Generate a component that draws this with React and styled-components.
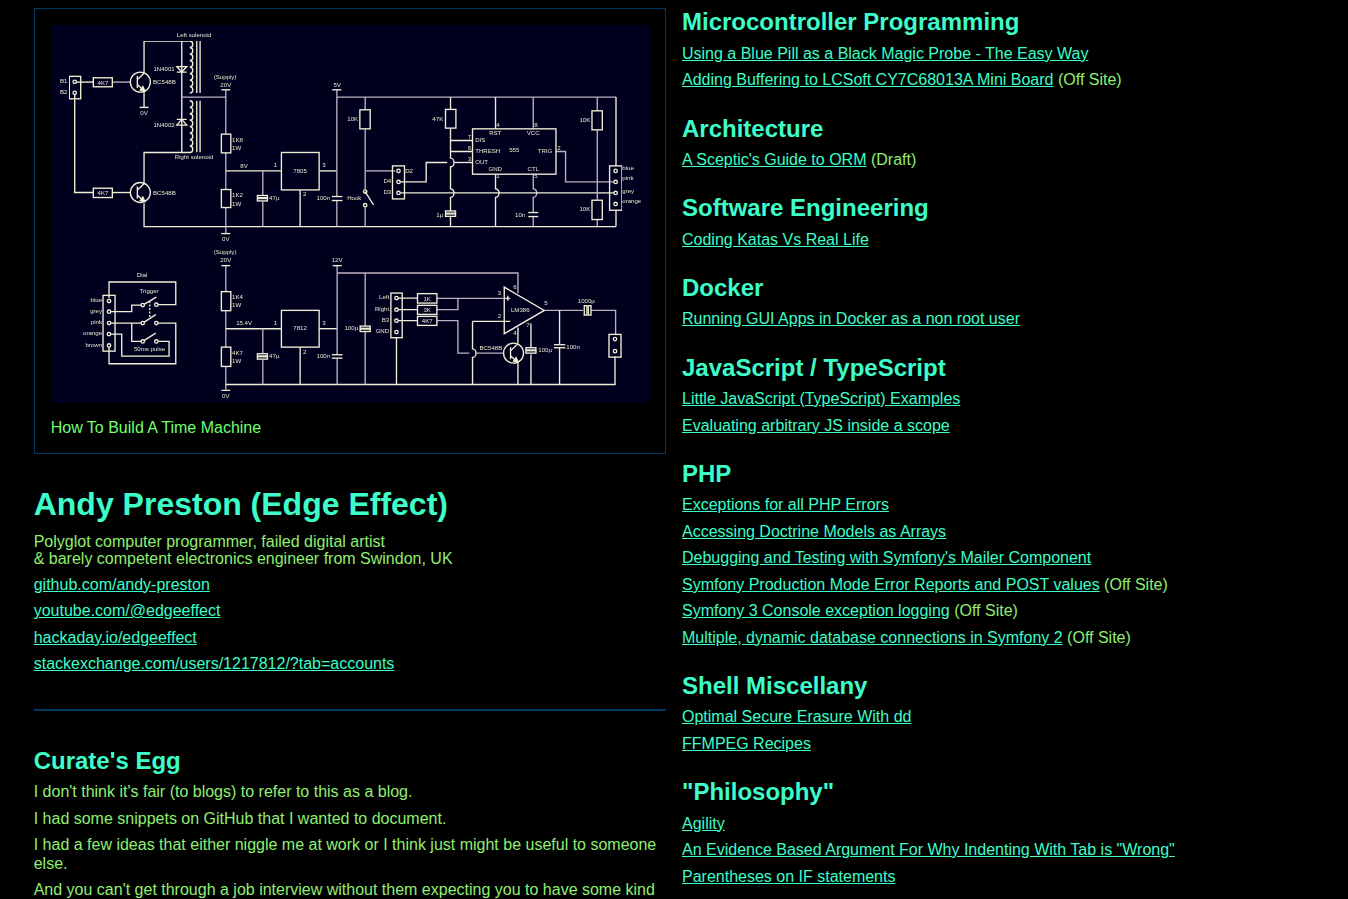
import React from "react";
import styled, { createGlobalStyle } from "styled-components";

const Global = createGlobalStyle`
  html, body { margin: 0; padding: 0; background: #000; }
  body { font-family: "Liberation Sans", Arial, sans-serif; font-size: 16px; line-height: 1.15; color: #90ee70; }
`;
const Page = styled.div`
  display: grid; grid-template-columns: 1fr 1fr; column-gap: 16px; padding: 8px 2.5% 0; box-sizing: border-box;
`;
const Column = styled.div`min-width: 0;`;
const RightColumn = styled(Column)`padding-top: 0.35px;`;
const Figure = styled.figure`
  margin: 0; padding: 16px; border: 1px solid #003a63;
`;
const Diagram = styled.svg`display: block; width: 100%; height: 377.5px; background: #00001e;`;
const Caption = styled.figcaption`margin-top: 16px; color: #70ff70;`;
const Title = styled.h1`margin: 32px 0 10px; font-size: 32px; font-weight: 700; color: #3dfdc8;`;
const Heading = styled.h2`
  margin: ${p => (p.$first ? "0" : "24.7px")} 0 8.9px; font-size: 24px; font-weight: 700; color: #3dfdc8;
`;
const Bio = styled.p`margin: 0 0 8.3px; line-height: 17.3px; color: #90ee70;`;
const Item = styled.p`margin: 8px 0; line-height: 18.5px; color: #90ee70;`;
const Link = styled.a`color: #3dfdc8; text-decoration: underline;`;
const Rule = styled.hr`margin: 35px 0 0; border: 0; border-top: 2px solid #003a63;`;
const EggHeading = styled(Heading)`margin: 36px 0 9.3px;`;

const sections = [
  ["Microcontroller Programming", [["Using a Blue Pill as a Black Magic Probe - The Easy Way"], ["Adding Buffering to LCSoft CY7C68013A Mini Board", "(Off Site)"]]],
  ["Architecture", [["A Sceptic's Guide to ORM", "(Draft)"]]],
  ["Software Engineering", [["Coding Katas Vs Real Life"]]],
  ["Docker", [["Running GUI Apps in Docker as a non root user"]]],
  ["JavaScript / TypeScript", [["Little JavaScript (TypeScript) Examples"], ["Evaluating arbitrary JS inside a scope"]]],
  ["PHP", [["Exceptions for all PHP Errors"], ["Accessing Doctrine Models as Arrays"], ["Debugging and Testing with Symfony's Mailer Component"], ["Symfony Production Mode Error Reports and POST values", "(Off Site)"], ["Symfony 3 Console exception logging", "(Off Site)"], ["Multiple, dynamic database connections in Symfony 2", "(Off Site)"]]],
  ["Shell Miscellany", [["Optimal Secure Erasure With dd"], ["FFMPEG Recipes"]]],
  ['"Philosophy"', [["Agility"], ['An Evidence Based Argument For Why Indenting With Tab is "Wrong"'], ["Parentheses on IF statements"]]],
];

const W = "#f0efd6";
const L = "#bdb1c0";
const wires = [
  // upper left
  ["M144 73V41H190", W], ["M181.7 41V152.3", W], ["M144 183V152.3H190", W], ["M144 107V90", W],
  ["M181.7 97H225.7", L], ["M225.7 89.7V134", L], ["M225.7 152.7V189.3", L], ["M225.7 207.3V233.3", L],
  ["M196.7 41V93M200 41V93M196.7 100.7V152M200 100.7V152", W],
  ["M74.7 82H93.3", W], ["M112.3 82H130", L], ["M74.7 92.7V192.3H93.3", W], ["M112.3 192.3H130", W],
  ["M144 203V226.3H615.7", W], ["M225.7 170.7H281.3", W], ["M262.7 170.7V195.3M262.7 201.3V226.3", L],
  ["M319 170.7H336.7", W], ["M336.7 89.7V196.3M336.7 200.3V226.3", L], ["M300 189.7V226.3", W],
  ["M336.7 97H615.7", L], ["M365 97V109.7M365 128.7V189", L], ["M365 207V226.3", L], ["M365 170.7H395", L],
  ["M398.3 181.7H426V162.3H447", W], ["M454 162.3H472.3", W],
  ["M450.3 97V109.3", W], ["M450.3 128V158a3.5 4.3 0 0 1 0 8.6V188.5a3.5 4.3 0 0 1 0 8.6V210.7M450.3 216.3V226.3", W],
  ["M450.3 140.3H472.3M450.3 151.3H472.3", W],
  ["M495.3 97V128.7M495.3 174V188.5a3.5 4.3 0 0 1 0 8.6V226.3", W],
  ["M533 97V128.7", L], ["M533 174V188.5a3.5 4.3 0 0 1 0 8.6V212.3M533 216.3V226.3", L],
  ["M398.3 192.7H615.3", W], ["M555.7 151.3H565.3V181.7H615.3", L],
  ["M597 97V110.7M597 129.7V200M597 219.3V226.3", L], ["M615.7 97V165.7M615.7 210V226.3", W],
  // dial
  ["M109 298V281.7H175.7V304.3H156.3", W], ["M109 311.3H131.7V304.7H142.7", W], ["M142.7 304.7L156.3 296.7", W],
  ["M109 322.7H142.7", W], ["M142.7 322.7L155.7 314.3", W], ["M156.3 322.7H175.7V363.3H109V345", W],
  ["M131.7 322.7V341H142.7", W], ["M142.7 341L155.7 332.7", W], ["M156.3 341H169V355.7H121.7V333.7H109", W],
  // lower
  ["M225.7 265.3V291.3", L], ["M225.7 310.3V346.7", L], ["M225.7 366V390", L], ["M225.7 328.3H281.3", W],
  ["M225.7 384H615.3", W], ["M262.7 328.3V353.3M262.7 359.3V384", L], ["M300 346.7V384", W], ["M319 328.3H337", W],
  ["M337 265.3V354.3M337 357.7V384", L], ["M337 272.7H517.7V293", L], ["M365 272.7V325.7M365 331V384", L],
  ["M396.3 297.7H417.3M396.3 309.3H417.3M396.3 320.3H417.3", W], ["M396.3 337.3V384", W],
  ["M436.7 298H503.3M436.7 309.3H457.7V298", L], ["M436.7 320.3H457.7V352.7H469M476 352.7H503.3", L],
  ["M472.3 321H504M472.3 321V348.4a3.5 4.3 0 0 1 0 8.6V384", W],
  ["M517.7 327V343", W], ["M517.7 362V384", W], ["M530.7 323V347.3M530.7 354V384", W],
  ["M544 310H582.7M590.7 310H615.3V334", L], ["M559.3 310V344.3M559.3 347.3V384", W], ["M614.7 356V384", W],
];
const boxes = [
  [69.3,76.3,11.4,22.4],[93.3,77.7,19,9],[93.3,188,19,9.3],[221.3,134,9.4,18.7],[221.3,189.3,9.4,18],
  [281.3,152.3,37.7,37.4],[359.7,109.7,10.3,19],[392.3,165.7,12,33],[445.3,109.3,10.4,18.7],[472.3,128.7,83.4,45.3],
  [591.7,110.7,10.3,19],[591.7,200,10.3,19.3],[609.3,165.7,12.4,44.3],
  [103,295,12,55.7],[221.3,291.3,9.4,19],[221.3,346.7,9.4,19.3],[281.3,310,37.7,36.7],
  [390.7,292.7,11.3,44.6],[417.3,293.3,19.4,9.4],[417.3,305,19.4,9],[417.3,316,19.4,9],[608.7,334,12,22.7],
  [584,305.3,2.6,9.4],[588,305.3,2.7,9.4],
];
const polarCaps = [[257.3,195.3],[257.3,353.3],[445.3,210.7],[360,325.7],[525.7,347.3]];
const plates = [[331.7,196.3,342.3],[331.7,200.3,342.3],[528,212.3,538],[528,216.3,538],[331.7,354.3,342.3],[331.7,357.7,342.3],[553.7,344.3,565],[553.7,347.3,565]];
const grounds = [[144,107.3],[225.7,233.3],[225.7,390]];
const rails = [[225.7,89.7],[336.7,89.7],[225.7,265.3],[337,265.3]];
const pins = [
  [74.7,81.7],[74.7,92.7],[398.3,170.7],[398.3,181.7],[398.3,192.7],[615.3,170.7],[615.3,181.7],[615.3,192.7],[615.3,203.7],
  [365,191.3],[365,205],[109,300.7],[109,311.3],[109,322.7],[109,333.7],[109,345],
  [142.7,304.7],[156.3,304.3],[142.7,322.7],[156.3,322.7],[142.7,341],[156.3,341],
  [396.3,297.7],[396.3,309.3],[396.3,320.3],[396.3,331.7],[614.7,338.7],[614.7,350.7],
];
const labels = [
  ["Left solenoid",194,37,"middle"],["1N4001",164,71,"middle"],["BC548B",153,84],["0V",144,115,"middle"],["B1",67.5,83,"end"],["B2",67.5,94,"end"],
  ["4K7",103,84.5,"middle"],["4K7",103,194.5,"middle"],["1N4002",164,127,"middle"],["Right solenoid",194,159,"middle"],["BC548B",153,195],
  ["(Supply)",225,79,"middle"],["20V",225.7,87,"middle"],["5V",337,87,"middle"],["1K8",232,142],["1W",232,150],["8V",244,168,"middle"],["1",277,167,"end"],
  ["3",322,167],["2",303,196],["7805",300,172.5,"middle"],["1K2",232,197],["1W",232,206],["47\u00b5",269,200],["100n",330,200,"end"],["0V",225.7,241,"middle"],["Hook",347,200],
  ["10K",358,121,"end"],["47K",443,121,"end"],["D2",405,173],["D4",391,183,"end"],["D3",391,194,"end"],["1\u00b5",443,217,"end"],
  ["4",496,127],["8",534,127],["7",471,139,"end"],["6",471,150,"end"],["3",471,161,"end"],["2",557,150],["1",496,178],["5",534,178],
  ["RST",495,135,"middle"],["VCC",533,135,"middle"],["DIS",475,142],["THRESH",475,153],["555",514,152,"middle"],["TRIG",552,153,"end"],["OUT",475,164],["GND",495,171,"middle"],["CTL",533,171,"middle"],
  ["10n",525,217,"end"],["10K",590,122,"end"],["10K",590,211,"end"],["blue",622,170],["pink",622,180],["grey",622,193],["orange",622,203],
  ["Dial",142,277,"middle"],["Trigger",149,293,"middle"],["blue",102,302,"end"],["grey",102,313,"end"],["pink",102,324,"end"],["orange",102,335,"end"],["brown",102,347,"end"],["50ms pulse",149.5,351,"middle"],
  ["(Supply)",225,254,"middle"],["20V",225.7,262,"middle"],["12V",337,262,"middle"],["1K4",232,299],["1W",232,307],["15.4V",244,325,"middle"],["1",277,325,"end"],["3",322,325],["2",303,354],["7812",300,329.5,"middle"],
  ["4K7",232,355],["1W",232,363],["47\u00b5",269,358],["100n",330,358,"end"],["0V",225.7,398,"middle"],
  ["100\u00b5",358,330,"end"],["Left",389,299,"end"],["Right",389,311,"end"],["B3",389,322,"end"],["GND",389,333,"end"],["1K",427,300.5,"middle"],["3K",427,311.5,"middle"],["4K7",427,322.5,"middle"],
  ["3",501,295,"end"],["2",501,318,"end"],["6",513,289],["7",526,327],["4",513,335],["5",544,305],["LM386",520,312,"middle"],["BC548B",502,350,"end"],["100\u00b5",538,352],["100n",566,349],["1000\u00b5",586,303,"middle"],
];

const Schematic = () => (
  <Diagram viewBox="51 25 598 377" preserveAspectRatio="none" role="img" aria-label="Time machine circuit schematic">
    <defs><filter id="soft" x="0" y="0" width="1" height="1"><feGaussianBlur stdDeviation="0.33" /></filter></defs>
    <g filter="url(#soft)" fill="none" strokeWidth="1.35">
      {wires.map(([d, c], i) => <path key={i} d={d} stroke={c} />)}
      {boxes.map(([x, y, w, h], i) => <rect key={i} x={x} y={y} width={w} height={h} stroke={W} />)}
      {polarCaps.map(([x, y], i) => <g key={i} stroke={W}><rect x={x} y={y} width="10" height="2.2" /><rect x={x} y={y + 3} width="10" height="2.4" /></g>)}
      {plates.map(([a, y, b], i) => <path key={i} d={`M${a} ${y}H${b}`} stroke={W} />)}
      {grounds.map(([x, y], i) => <path key={i} d={`M${x - 4.5} ${y}H${x + 4.5}`} stroke={W} />)}
      {rails.map(([x, y], i) => <path key={i} d={`M${x - 4.5} ${y}H${x + 4.5}`} stroke={W} />)}
      {pins.map(([x, y], i) => <circle key={i} cx={x} cy={y} r="1.7" fill="#00001e" stroke={W} />)}
      {[[140.3, 82], [140.3, 192.3], [513.3, 352.7]].map(([x, y], i) => (
        <g key={i} stroke={W}>
          <circle cx={x} cy={y} r="10" />
          <path d={`M${x - 3} ${y - 6}V${y + 6}M${x - 3} ${y - 2.5}L${x + 4} ${y - 9}M${x - 3} ${y + 2.5}L${x + 4} ${y + 9}`} />
          <path d={`M${x + 4.5} ${y + 9}l-4.5 -1l2.5 -3.5z`} fill={W} />
        </g>
      ))}
      {[[190.7, 41, 93], [190.7, 100.7, 152.3]].map(([x, a, b], i) => {
        const n = 8, s = (b - a) / n;
        return <path key={i} stroke={W} d={`M${x - 1} ${a}` + Array.from({ length: n }, () => `a3 ${s / 2} 0 0 1 0 ${s}`).join("")} />;
      })}
      <path d="M176.7 66.5H186.7L181.7 72ZM176.7 72H186.7M176.7 125H186.7L181.7 119.3ZM176.7 119.3H186.7" stroke={W} />
      <path d="M149.7 300.7V318.3" stroke={W} strokeDasharray="2 1.5" />
      <path d="M365 191.3L373.3 204.7" stroke={W} />
      <path d="M504 286.7V333.3L544 310Z" stroke={W} />
      <path d="M505 298H510M507.5 295.5V300.5M505 321H510" stroke={W} />
    </g>
    <g filter="url(#soft)" fontFamily="'Liberation Sans', sans-serif" fontSize="6.1" fill="#e6e6ce">
      {labels.map(([t, x, y, a], i) => <text key={i} x={x} y={y} textAnchor={a || "start"}>{t}</text>)}
    </g>
  </Diagram>
);

export default function App() {
  return (
    <>
      <Global />
      <Page>
        <Column>
          <Figure>
            <Schematic />
            <Caption>How To Build A Time Machine</Caption>
          </Figure>
          <Title>Andy Preston (Edge Effect)</Title>
          <Bio>Polyglot computer programmer, failed digital artist<br />&amp; barely competent electronics engineer from Swindon, UK</Bio>
          {["github.com/andy-preston", "youtube.com/@edgeeffect", "hackaday.io/edgeeffect", "stackexchange.com/users/1217812/?tab=accounts"].map(t => (
            <Item key={t}><Link href="#">{t}</Link></Item>
          ))}
          <Rule />
          <EggHeading>Curate's Egg</EggHeading>
          <Item>I don't think it's fair (to blogs) to refer to this as a blog.</Item>
          <Item>I had some snippets on GitHub that I wanted to document.</Item>
          <Item>I had a few ideas that either niggle me at work or I think just might be useful to someone else.</Item>
          <Item>And you can't get through a job interview without them expecting you to have some kind</Item>
        </Column>
        <RightColumn>
          {sections.map(([title, items], i) => (
            <section key={title}>
              <Heading $first={i === 0}>{title}</Heading>
              {items.map(([t, note]) => (
                <Item key={t}><Link href="#">{t}</Link>{note ? ` ${note}` : ""}</Item>
              ))}
            </section>
          ))}
        </RightColumn>
      </Page>
    </>
  );
}
